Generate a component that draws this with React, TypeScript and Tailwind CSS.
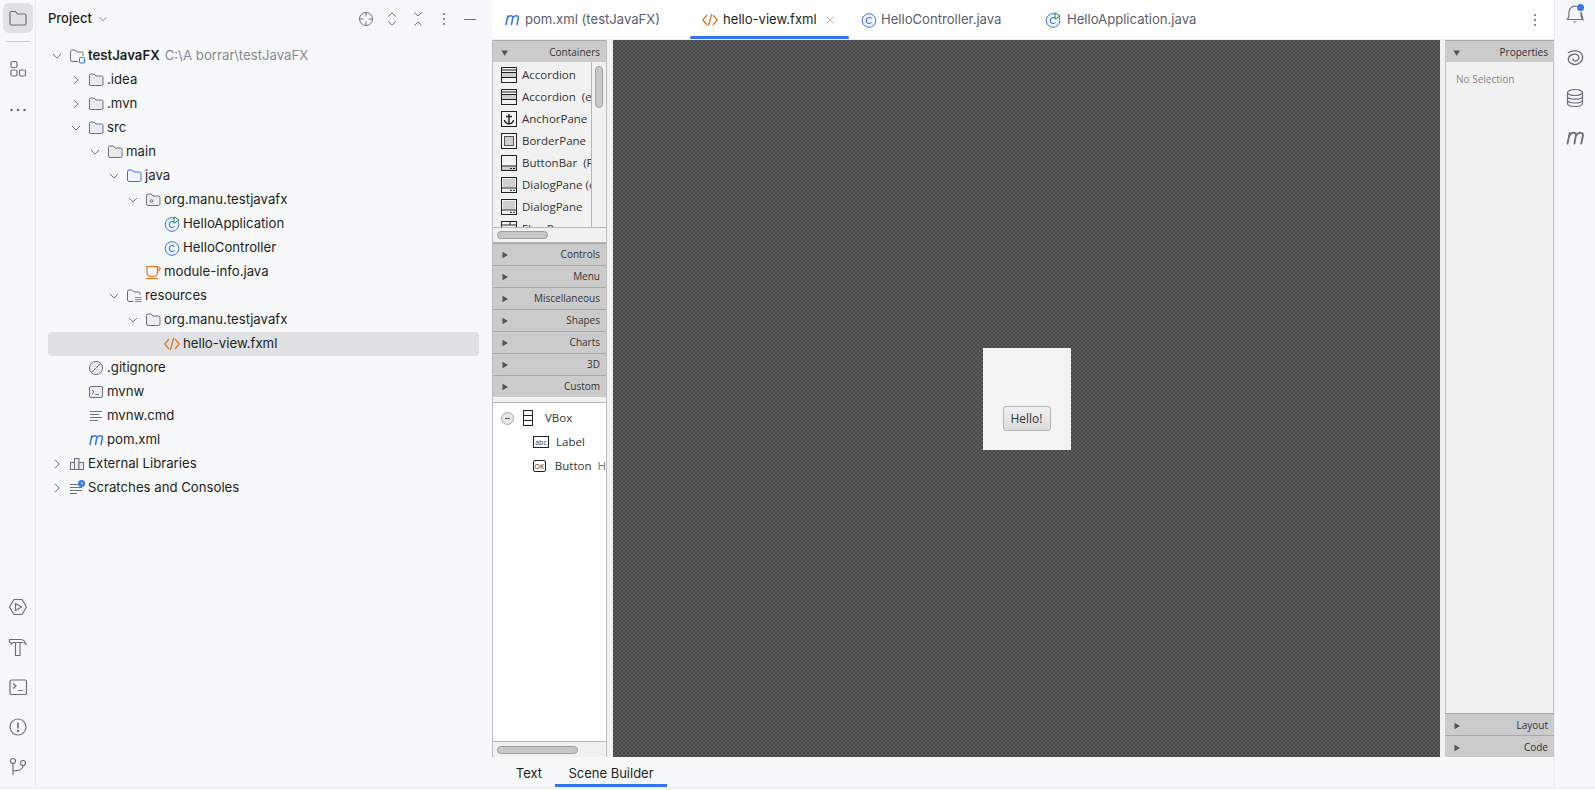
const ijFont = "font-['Inter','Noto_Sans',sans-serif]";
const sbFont = "font-['Open_Sans','Noto_Sans',sans-serif]";

const GRAY = "#6c707e";
const BLUE = "#3574f0";
const ORANGE = "#e66d17";

type IconProps = { className?: string };

function Folder({ color = GRAY, fill = "#ebecf0", className }: IconProps & { color?: string; fill?: string }) {
  return (
    <svg viewBox="0 0 16 16" className={className ?? "h-4 w-4"} fill="none">
      <path d="M1.5 3.5a1.5 1.5 0 0 1 1.5-1.5h3.2l1.8 2h5.5a1.5 1.5 0 0 1 1.5 1.5v6.5a1.5 1.5 0 0 1-1.5 1.5H3a1.5 1.5 0 0 1-1.5-1.5z" fill={fill} stroke={color} />
    </svg>
  );
}

function ClassIcon({ run }: { run?: boolean }) {
  return (
    <svg viewBox="0 0 16 16" className="h-4 w-4" fill="none">
      <circle cx="8" cy="8.5" r="6.8" fill="#f0f5ff" stroke={BLUE} />
      <path d="M10.5 6.5a3 3 0 1 0 0 4" stroke={BLUE} strokeWidth="1.1" />
      {run && <path d="M10 .8v6.4l5-3.2z" fill="#f2fcf3" stroke="#208a3c" strokeLinejoin="round" />}
    </svg>
  );
}

function XmlIcon({ className }: IconProps) {
  return (
    <svg viewBox="0 0 16 16" className={className ?? "h-4 w-4"} fill="none" stroke={ORANGE} strokeWidth="1.2">
      <path d="M5 3 .8 8 5 13M11 3l4.2 5L11 13M9.6 2 6.4 14" />
    </svg>
  );
}

function MavenIcon({ color = BLUE, className }: IconProps & { color?: string }) {
  return (
    <svg viewBox="0 0 16 16" className={className ?? "h-4 w-4"} fill="none" stroke={color} strokeWidth="1.5" strokeLinecap="round">
      <path d="M1 13 2.8 4.5M2.6 6.5C4 3.8 7.8 3.5 7.8 6.2L6.5 13M7.8 6.5C9.2 3.8 13.3 3.5 13.4 6.2L12 13" transform="translate(1 -.5)" />
    </svg>
  );
}

function Chevron({ open }: { open: boolean }) {
  return (
    <svg viewBox="0 0 16 16" className="h-4 w-4" fill="none" stroke={GRAY} strokeWidth="1">
      {open ? <path d="m4 6 4 4 4-4" /> : <path d="m6 4 4 4-4 4" />}
    </svg>
  );
}

function TreeIcon({ kind }: { kind: string }) {
  switch (kind) {
    case "project":
      return (
        <svg viewBox="0 0 16 16" className="h-4 w-4" fill="none">
          <path d="M9 13.5H3A1.5 1.5 0 0 1 1.5 12V3.5A1.5 1.5 0 0 1 3 2h3.2l1.8 2h5.5A1.5 1.5 0 0 1 14 5.5V8" stroke={GRAY} />
          <rect x="10.5" y="9.5" width="5" height="5.5" rx="1" fill="#f0f5ff" stroke={BLUE} />
        </svg>
      );
    case "source":
      return <Folder color={BLUE} fill="#f0f5ff" />;
    case "package":
      return (
        <svg viewBox="0 0 16 16" className="h-4 w-4" fill="none" stroke={GRAY}>
          <path d="M1.5 3.5a1.5 1.5 0 0 1 1.5-1.5h3.2l1.8 2h5.5a1.5 1.5 0 0 1 1.5 1.5v6.5a1.5 1.5 0 0 1-1.5 1.5H3a1.5 1.5 0 0 1-1.5-1.5z" fill="#ebecf0" />
          <circle cx="6.5" cy="9" r="1.3" />
        </svg>
      );
    case "appclass":
      return <ClassIcon run />;
    case "class":
      return <ClassIcon />;
    case "java":
      return (
        <svg viewBox="0 0 16 16" className="h-4 w-4" fill="none" stroke={ORANGE} strokeWidth="1.2">
          <path d="M2 2.5h10.5v6a4 4 0 0 1-4 4H6a4 4 0 0 1-4-4zM12.5 3h1a1.3 1.3 0 0 1 0 3.2h-1M1 14.5h12" />
        </svg>
      );
    case "resources":
      return (
        <svg viewBox="0 0 16 16" className="h-4 w-4" fill="none">
          <path d="M7.5 13.5H3A1.5 1.5 0 0 1 1.5 12V3.5A1.5 1.5 0 0 1 3 2h3.2l1.8 2h5.5A1.5 1.5 0 0 1 14 5.5V7" stroke={GRAY} />
          <path d="M9 9.5h6.5M9 11.5h6.5M9 13.5h6.5" stroke={ORANGE} strokeWidth="1.2" />
        </svg>
      );
    case "xml":
      return <XmlIcon />;
    case "ignore":
      return (
        <svg viewBox="0 0 16 16" className="h-4 w-4" fill="#ebecf0" stroke={GRAY}>
          <circle cx="8" cy="8" r="6.5" />
          <path d="M3.5 12.5l9-9" />
        </svg>
      );
    case "shell":
      return (
        <svg viewBox="0 0 16 16" className="h-4 w-4" fill="#ebecf0" stroke={GRAY}>
          <rect x="1.5" y="2.5" width="13" height="11" rx="1.5" />
          <path d="m4 6 2 2-2 2M7.5 10.5H11" fill="none" />
        </svg>
      );
    case "text":
      return (
        <svg viewBox="0 0 16 16" className="h-4 w-4" fill="none" stroke={GRAY}>
          <path d="M2 3.5h12M2 6.5h9M2 9.5h12M2 12.5h8" />
        </svg>
      );
    case "maven":
      return <MavenIcon />;
    case "libs":
      return (
        <svg viewBox="0 0 16 16" className="h-4 w-4" fill="#ebecf0" stroke={GRAY}>
          <rect x="1.5" y="6.5" width="4" height="7" />
          <rect x="5.5" y="2.5" width="4.5" height="11" />
          <rect x="10" y="6.5" width="4.5" height="7" />
        </svg>
      );
    case "scratch":
      return (
        <svg viewBox="0 0 16 16" className="h-4 w-4" fill="none">
          <path d="M1 4.5h8M1 7.5h12M1 10.5h12M1 13.5h7" stroke={GRAY} />
          <circle cx="12.5" cy="3.5" r="3.5" fill={BLUE} />
          <path d="M12.5 1.8v2h1.4" stroke="#fff" strokeWidth=".9" />
        </svg>
      );
    default:
      return <Folder />;
  }
}

const TREE = [
  { depth: 0, open: true, icon: "project", label: "testJavaFX", hint: "C:\\A borrar\\testJavaFX" },
  { depth: 1, open: false, icon: "folder", label: ".idea" },
  { depth: 1, open: false, icon: "folder", label: ".mvn" },
  { depth: 1, open: true, icon: "folder", label: "src" },
  { depth: 2, open: true, icon: "folder", label: "main" },
  { depth: 3, open: true, icon: "source", label: "java" },
  { depth: 4, open: true, icon: "package", label: "org.manu.testjavafx" },
  { depth: 5, icon: "appclass", label: "HelloApplication" },
  { depth: 5, icon: "class", label: "HelloController" },
  { depth: 4, icon: "java", label: "module-info.java" },
  { depth: 3, open: true, icon: "resources", label: "resources" },
  { depth: 4, open: true, icon: "folder", label: "org.manu.testjavafx" },
  { depth: 5, icon: "xml", label: "hello-view.fxml", selected: true },
  { depth: 1, icon: "ignore", label: ".gitignore" },
  { depth: 1, icon: "shell", label: "mvnw" },
  { depth: 1, icon: "text", label: "mvnw.cmd" },
  { depth: 1, icon: "maven", label: "pom.xml" },
  { depth: 0, open: false, icon: "libs", label: "External Libraries" },
  { depth: 0, open: false, icon: "scratch", label: "Scratches and Consoles" },
];

function ProjectPanel() {
  return (
    <div className="flex w-[456px] shrink-0 flex-col">
      <div className="flex h-[38px] items-center pl-3 pr-[14px]">
        <span className="text-[13px] font-medium text-[#1e1f22]">Project</span>
        <svg viewBox="0 0 16 16" className="ml-1 h-[14px] w-[14px]" fill="none" stroke={GRAY}>
          <path d="m4 6 4 4 4-4" />
        </svg>
        <div className="ml-auto flex items-center gap-[10px]">
          <svg viewBox="0 0 16 16" className="h-4 w-4" fill="none" stroke={GRAY}>
            <circle cx="8" cy="8" r="6.5" />
            <path d="M8 1.5v4M8 10.5v4M1.5 8h4M10.5 8h4" />
          </svg>
          <svg viewBox="0 0 16 16" className="h-4 w-4" fill="none" stroke={GRAY}>
            <path d="m4.5 5.5 3.5-3.5 3.5 3.5M4.5 10.5 8 14l3.5-3.5" />
          </svg>
          <svg viewBox="0 0 16 16" className="h-4 w-4" fill="none" stroke={GRAY}>
            <path d="m4.5 1.5 3.5 3.5 3.5-3.5M4.5 14.5 8 11l3.5 3.5" />
          </svg>
          <svg viewBox="0 0 16 16" className="h-4 w-4" fill={GRAY}>
            <circle cx="8" cy="3" r="1.1" />
            <circle cx="8" cy="8" r="1.1" />
            <circle cx="8" cy="13" r="1.1" />
          </svg>
          <svg viewBox="0 0 16 16" className="h-4 w-4" fill="none" stroke={GRAY}>
            <path d="M2 8.5h12" />
          </svg>
        </div>
      </div>
      <div className="flex flex-col pt-[6px]">
        {TREE.map((row, i) => (
          <div
            key={i}
            className={`ml-3 mr-[13px] flex h-6 items-center rounded-[4px] text-[13.2px] text-[#1e1f22] ${row.selected ? "bg-[#dfe1e5]" : ""}`}
          >
            <div className="flex items-center" style={{ marginLeft: row.depth * 19 }}>
              <span className="flex w-[17px] justify-center">{row.open !== undefined && <Chevron open={row.open} />}</span>
              <span className="mr-[3px] ml-[4px]"><TreeIcon kind={row.icon} /></span>
              <span className={row.depth === 0 && row.hint ? "font-semibold" : ""}>{row.label}</span>
              {row.hint && <span className="ml-[5px] text-[#868a91]">{row.hint}</span>}
            </div>
          </div>
        ))}
      </div>
    </div>
  );
}

function LeftStrip() {
  return (
    <div className="flex w-9 shrink-0 flex-col items-center border-r border-[#ebecf0]">
      <div className="mt-[3px] flex h-[30px] w-[30px] items-center justify-center rounded-md bg-[#dfe1e5]">
        <svg viewBox="0 0 20 20" className="h-5 w-5" fill="none" stroke={GRAY} strokeWidth="1.2">
          <path d="M2 5a1.5 1.5 0 0 1 1.5-1.5h4l2 2.5h7A1.5 1.5 0 0 1 18 7.5v8a1.5 1.5 0 0 1-1.5 1.5h-13A1.5 1.5 0 0 1 2 15.5z" />
        </svg>
      </div>
      <div className="mt-2 h-px w-6 bg-[#c9ccd6]" />
      <svg viewBox="0 0 20 20" className="mt-[17px] h-5 w-5" fill="none" stroke={GRAY} strokeWidth="1.2">
        <rect x="3" y="2.5" width="6" height="6" rx="1.5" />
        <rect x="3" y="11" width="6" height="6" rx="1.5" />
        <rect x="11.5" y="11" width="6" height="6" rx="1.5" />
      </svg>
      <svg viewBox="0 0 20 20" className="mt-[21px] h-5 w-5" fill={GRAY}>
        <circle cx="3.5" cy="10" r="1.3" />
        <circle cx="10" cy="10" r="1.3" />
        <circle cx="16.5" cy="10" r="1.3" />
      </svg>
      <div className="mt-auto flex flex-col items-center gap-5 pb-[10px]">
        <svg viewBox="0 0 20 20" className="h-5 w-5" fill="none" stroke={GRAY} strokeWidth="1.2">
          <path d="M6 2.5h8l4.5 7.5-4.5 7.5H6L1.5 10z" />
          <path d="M7.5 6.5v7l6-3.5z" />
        </svg>
        <svg viewBox="0 0 20 20" className="h-5 w-5" fill="none" stroke={GRAY} strokeWidth="1.2">
          <path d="M7.5 5.5v13H12v-13M1.500 2.500h11c2.500 0 4.500 1.500 5.500 4.500-1.500-1-3-1.500-5-1.500H5L3.500 7l-2-2z" />
        </svg>
        <svg viewBox="0 0 20 20" className="h-5 w-5" fill="none" stroke={GRAY} strokeWidth="1.2">
          <rect x="2" y="3" width="16.5" height="14.5" rx="1.5" />
          <path d="m5 6.500 3 2.500-3 2.500M10 13.500h5" />
        </svg>
        <svg viewBox="0 0 20 20" className="h-5 w-5" fill="none" stroke={GRAY} strokeWidth="1.2">
          <circle cx="10" cy="10" r="8" />
          <path d="M10 5.500v6" strokeWidth="1.6" />
          <circle cx="10" cy="14" r=".6" />
        </svg>
        <svg viewBox="0 0 20 20" className="h-5 w-5" fill="none" stroke={GRAY} strokeWidth="1.2">
          <circle cx="5" cy="4" r="2.5" />
          <circle cx="15" cy="6" r="2.5" />
          <path d="M5 6.500V18M5 14c4 0 10-1 10-5.500" />
        </svg>
      </div>
    </div>
  );
}

function RightStrip() {
  return (
    <div className="flex w-[41px] shrink-0 flex-col items-center gap-5 border-l border-[#ebecf0] pt-1">
      <svg viewBox="0 0 20 20" className="mb-1 h-5 w-5" fill="none" stroke={GRAY} strokeWidth="1.2">
        <path d="M2 15.500c1.500-1 2-2.500 2-4.500V8a6 6 0 0 1 8-5.500M16 8v3c0 2 .5 3.500 2 4.500zM2 15.500h16M8.500 18h3" />
        <circle cx="15.5" cy="3.5" r="3.5" fill={BLUE} stroke="none" />
      </svg>
      <svg viewBox="0 0 20 20" className="h-5 w-5" fill="none" stroke={GRAY} strokeWidth="1.3">
        <path d="M3 5c4-3.500 13-3 14.500 3 1 5-3.500 9-8.500 8.500-4-.5-6.500-4-5.500-6.500 1-3.500 7-5 9.500-2.500 2 2 .5 5.500-2.500 5.500-2 0-3-1.500-2.500-2.500" />
      </svg>
      <svg viewBox="0 0 20 20" className="h-5 w-5" fill="none" stroke={GRAY} strokeWidth="1.2">
        <ellipse cx="10" cy="4.5" rx="7.5" ry="3" />
        <path d="M2.500 4.500v11c0 1.700 3.400 3 7.500 3s7.500-1.300 7.500-3v-11M2.500 8.200c0 1.700 3.400 3 7.500 3s7.500-1.300 7.500-3M2.500 12c0 1.700 3.400 3 7.500 3s7.500-1.300 7.500-3" />
      </svg>
      <MavenIcon color={GRAY} className="h-5 w-5" />
    </div>
  );
}

function EditorTabs() {
  return (
    <div className="flex h-10 shrink-0 items-stretch border-b border-[#ebecf0] bg-white text-[13.1px]">
      <div className="flex w-[198px] items-center pl-3 text-[#5a5d6b]">
        <MavenIcon className="mr-[5px] h-4 w-4" />
        <span>pom.xml (testJavaFX)</span>
      </div>
      <div className="relative flex w-[159px] items-center pl-3 text-[#1e1f22]">
        <XmlIcon className="mr-[5px] h-4 w-4" />
        <span>hello-view.fxml</span>
        <svg viewBox="0 0 16 16" className="ml-[6px] h-[14px] w-[14px]" fill="none" stroke="#a8adbd">
          <path d="m4 4 8 8M12 4l-8 8" />
        </svg>
        <div className="absolute inset-x-0 bottom-0 h-[3px] rounded-full bg-[#3574f0]" />
      </div>
      <div className="flex w-[185px] items-center pl-3 text-[#5a5d6b]">
        <span className="mr-[4px]"><ClassIcon /></span>
        <span>HelloController.java</span>
      </div>
      <div className="flex items-center pl-[11px] text-[#5a5d6b]">
        <span className="mr-[6px]"><ClassIcon run /></span>
        <span>HelloApplication.java</span>
      </div>
      <div className="ml-auto flex items-center pr-[11px]">
        <svg viewBox="0 0 16 16" className="h-4 w-4" fill={GRAY}>
          <circle cx="8" cy="3" r="1.1" />
          <circle cx="8" cy="8" r="1.1" />
          <circle cx="8" cy="13" r="1.1" />
        </svg>
      </div>
    </div>
  );
}

function SbHeader({ label, open, className }: { label: string; open?: boolean; className?: string }) {
  return (
    <div className={`flex h-[22px] shrink-0 items-center border-t border-[#a9a9a9] bg-[#cbcbcb] pr-[6px] pl-[8px] text-[10px] text-[#333] ${className ?? ""}`}>
      <svg viewBox="0 0 8 8" className="h-2 w-2" fill="#555">
        {open ? <path d="M.5 1.500h6.500L3.750 7z" /> : <path d="M1.500.8v6.500L7 4z" />}
      </svg>
      <span className="ml-auto">{label}</span>
    </div>
  );
}

function LibIcon({ kind }: { kind: string }) {
  const s = "#222";
  const f = "#cfcfcf";
  return (
    <svg viewBox="0 0 16 16" className="h-4 w-4 shrink-0" fill="none" stroke={s}>
      <rect x=".5" y=".5" width="15" height="15" fill="#f4f4f4" />
      {kind === "acc" && (
        <>
          <rect x=".5" y="5.500" width="15" height="5" fill={f} />
          <path d="M.5 3h15" />
        </>
      )}
      {kind === "anchor" && <path d="M8 3v10M5 5.500h6M3.500 9c0 3 2.500 3.500 4.500 4 2-.5 4.500-1 4.500-4" strokeWidth="1.4" />}
      {kind === "border" && <rect x="3.500" y="3.500" width="9" height="9" fill={f} stroke="#555" />}
      {kind === "bar" && (
        <>
          <rect x=".5" y="11" width="15" height="4.500" fill={f} />
          <path d="M9 13.500h2M12 13.500h2" />
        </>
      )}
      {kind === "dialog" && (
        <>
          <rect x="2" y="2" width="12" height="8" fill={f} stroke="none" />
          <path d="M.5 11h15M9 13.300h2M12 13.300h2" />
        </>
      )}
      {kind === "flow" && <path d="M.5 4h15M9 .5v3.500" />}
    </svg>
  );
}

const LIB_ITEMS = [
  { kind: "acc", label: "Accordion" },
  { kind: "acc", label: "Accordion  (empty)" },
  { kind: "anchor", label: "AnchorPane" },
  { kind: "border", label: "BorderPane" },
  { kind: "bar", label: "ButtonBar  (FX8)" },
  { kind: "dialog", label: "DialogPane (empty)" },
  { kind: "dialog", label: "DialogPane" },
  { kind: "flow", label: "FlowPane" },
];

const SECTIONS = ["Controls", "Menu", "Miscellaneous", "Shapes", "Charts", "3D", "Custom"];

function LibraryColumn() {
  return (
    <div className={`flex w-[115px] shrink-0 flex-col ${sbFont} border-x border-[#bdbdbd] bg-[#f1f1f1]`}>
      <SbHeader label="Containers" open className="pt-[2px]" />
      <div className="relative flex h-[181px] shrink-0 flex-col overflow-hidden border-b border-[#b5b5b5]">
        <div className="flex h-[166px] border-b border-[#b5b5b5]">
          <div className="w-[99px] shrink-0 overflow-hidden border-r border-[#b5b5b5] pt-[2px]">
            {LIB_ITEMS.map((item, i) => (
              <div key={i} className="flex h-[22px] items-center pl-2 text-[11.5px] whitespace-pre text-[#333]">
                <LibIcon kind={item.kind} />
                <span className="ml-[5px]">{item.label}</span>
              </div>
            ))}
          </div>
          <div className="flex-1 px-[3px] pt-[4px]">
            <div className="h-[42px] w-2 rounded-full border border-[#9f9f9f] bg-[#c8c8c8]" />
          </div>
        </div>
        <div className="flex flex-1 items-center pl-[4px]">
          <div className="h-2 w-[51px] rounded-full border border-[#9f9f9f] bg-[#c8c8c8]" />
        </div>
      </div>
      {SECTIONS.map((s) => (
        <SbHeader key={s} label={s} />
      ))}
      <div className="mt-[5px] flex min-h-0 flex-1 flex-col border-t border-[#b5b5b5] bg-white text-[11.5px] text-[#333]">
        <div className="flex-1 overflow-hidden pt-[3px]">
          <div className="flex h-6 items-center pl-[8px]">
            <span className="flex h-[13px] w-[13px] items-center justify-center rounded-full border border-[#a8a8a8] bg-[#e6e6e6]">
              <span className="h-px w-[5px] bg-[#555]" />
            </span>
            <svg viewBox="0 0 10 16" className="ml-[9px] h-4 w-[10px]" fill="none" stroke="#222">
              <rect x=".5" y=".5" width="9" height="15" />
              <path d="M.5 5.500h9M.5 10.500h9" />
            </svg>
            <span className="ml-[12px]">VBox</span>
          </div>
          <div className="flex h-6 items-center pl-[40px] whitespace-nowrap">
            <span className="flex h-[12px] w-4 items-center justify-center border border-[#222] text-[7px] leading-none">abc</span>
            <span className="ml-[7px]">Label</span>
          </div>
          <div className="flex h-6 items-center pl-[40px] whitespace-nowrap">
            <span className="flex h-[12px] w-4 items-center justify-center rounded-[2px] border border-[#222] text-[7px] leading-none">OK</span>
            <span className="ml-[9px]">Button</span>
            <span className="ml-[6px] text-[#777]">H</span>
          </div>
        </div>
        <div className="flex h-[16px] shrink-0 items-center border-t border-[#b5b5b5] bg-[#f1f1f1] pl-[4px]">
          <div className="h-2 w-[81px] rounded-full border border-[#9f9f9f] bg-[#c8c8c8]" />
        </div>
      </div>
    </div>
  );
}

function Canvas() {
  return (
    <div className="flex min-w-0 flex-1 items-center justify-center bg-[#4f4f4f] bg-[repeating-conic-gradient(#474747_0_25%,#5b5b5b_0_50%)] bg-[length:4px_4px]">
      <div className="flex h-[102px] w-[88px] items-center justify-center bg-[#f4f4f4] pt-[40px]">
        <button className={`flex h-[25px] w-[48px] items-center justify-center rounded-[3px] border border-[#b5b5b5] bg-gradient-to-b from-[#f0f0f0] to-[#dcdcdc] text-[12px] text-[#333] ${sbFont}`}>
          Hello!
        </button>
      </div>
    </div>
  );
}

function PropertiesColumn() {
  return (
    <div className={`flex w-[109px] shrink-0 flex-col ${sbFont} bg-[#f1f1f1]`}>
      <SbHeader label="Properties" open className="pt-[2px]" />
      <div className="flex-1 border-x border-[#c4c4c4] pt-[10px] pl-[10px] text-[10px] text-[#8a8a8a]">No Selection</div>
      <SbHeader label="Layout" className="pt-[2px]" />
      <SbHeader label="Code" className="pt-[2px]" />
    </div>
  );
}

function BottomTabs() {
  return (
    <div className="flex h-[30px] shrink-0 items-stretch pt-[4px] pl-[11px] text-[13px] text-[#1e1f22]">
      <div className="flex w-[52px] items-center justify-center">Text</div>
      <div className="relative flex w-[112px] items-center justify-center">
        Scene Builder
        <div className="absolute inset-x-0 bottom-0 h-[3px] bg-[#3574f0]" />
      </div>
    </div>
  );
}

export default function App() {
  return (
    <div className={`flex h-[790px] w-[1595px] flex-col overflow-hidden bg-[#f7f8fa] ${ijFont}`}>
      <div className="flex min-h-0 flex-1">
        <LeftStrip />
        <ProjectPanel />
        <div className="flex min-w-0 flex-1 flex-col">
          <EditorTabs />
          <div className="flex min-h-0 flex-1">
            <LibraryColumn />
            <div className="w-[6px] shrink-0 bg-[#f1f1f1]" />
            <Canvas />
            <div className="w-[5px] shrink-0 bg-[#f1f1f1]" />
            <PropertiesColumn />
          </div>
          <BottomTabs />
        </div>
        <RightStrip />
      </div>
      <div className="h-[3px] shrink-0 border-t border-[#ebecf0]" />
    </div>
  );
}
